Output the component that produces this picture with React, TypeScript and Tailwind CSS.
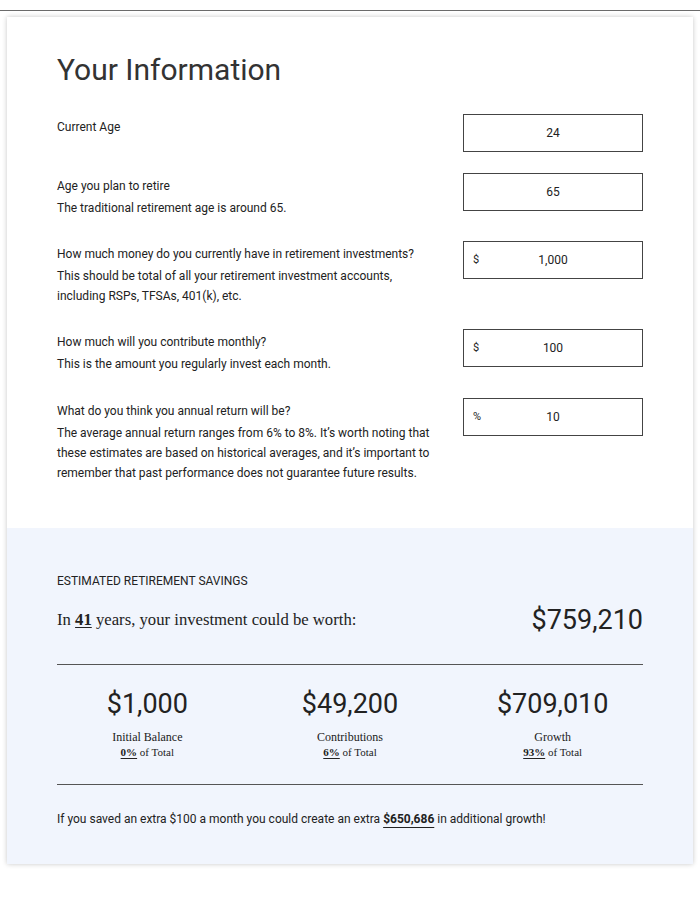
import type { ReactNode } from "react";

interface Field {
  label: string;
  help?: string;
  prefix?: string;
  value: string;
  gap: string;
}

const fields: Field[] = [
  { label: "Current Age", value: "24", gap: "mt-[26px]" },
  {
    label: "Age you plan to retire",
    help: "The traditional retirement age is around 65.",
    value: "65",
    gap: "mt-[21px]",
  },
  {
    label: "How much money do you currently have in retirement investments?",
    help: "This should be total of all your retirement investment accounts, including RSPs, TFSAs, 401(k), etc.",
    prefix: "$",
    value: "1,000",
    gap: "mt-[23px]",
  },
  {
    label: "How much will you contribute monthly?",
    help: "This is the amount you regularly invest each month.",
    prefix: "$",
    value: "100",
    gap: "mt-[23px]",
  },
  {
    label: "What do you think you annual return will be?",
    help: "The average annual return ranges from 6% to 8%. It’s worth noting that these estimates are based on historical averages, and it’s important to remember that past performance does not guarantee future results.",
    prefix: "%",
    value: "10",
    gap: "mt-[24px]",
  },
];

const breakdown = [
  { amount: "$1,000", label: "Initial Balance", pct: "0%" },
  { amount: "$49,200", label: "Contributions", pct: "6%" },
  { amount: "$709,010", label: "Growth", pct: "93%" },
];

function FieldRow({ field }: { field: Field }) {
  return (
    <div className={`flex items-start justify-between ${field.gap}`}>
      <div className="w-[385px] pt-[3px] text-[12px] leading-[20px] text-[#222]">
        <p>{field.label}</p>
        {field.help && <p className="mt-[2px]">{field.help}</p>}
      </div>
      <div className="relative flex h-[38px] w-[180px] items-center justify-center border border-[#444] bg-white text-[12px] text-[#222]">
        {field.prefix && (
          <span className="absolute left-[9px] text-[11px]">{field.prefix}</span>
        )}
        <span>{field.value}</span>
      </div>
    </div>
  );
}

function Rule() {
  return <div className="h-px bg-[#555]" />;
}

function Underlined({ children }: { children: ReactNode }) {
  return <span className="font-bold underline underline-offset-2">{children}</span>;
}

export default function App() {
  return (
    <div
      className="min-h-[900px] bg-white pt-[10px] text-[#222]"
      style={{ fontFamily: "Roboto, 'Liberation Sans', sans-serif" }}
    >
      <div className="h-px bg-[#6b6b6b]" />

      <div className="mx-[7px] mt-[6px] bg-white shadow-[0_0_5px_rgba(0,0,0,0.22)]">
        {/* ── Inputs ── */}
        <div className="px-[50px] pt-[35px] pb-[45px]">
          <h1 className="text-[30px] leading-[36px] font-normal text-[#333]">
            Your Information
          </h1>
          {fields.map((f) => (
            <FieldRow key={f.label} field={f} />
          ))}
        </div>

        {/* ── Results ── */}
        <div className="bg-[#f1f5fd] px-[50px] pt-[45px] pb-[37px]">
          <p className="text-[12px] leading-[16px] uppercase">
            Estimated Retirement Savings
          </p>

          <div className="mt-[14px] flex items-center justify-between">
            <p className="font-['Liberation_Serif',serif] text-[16.7px]">
              In <Underlined>41</Underlined> years, your investment could be worth:
            </p>
            <p className="text-[27px] leading-[34px]">$759,210</p>
          </div>

          <div className="mt-[27px]">
            <Rule />
          </div>

          <div className="-mx-[11px] mt-[22px] grid grid-cols-3 pb-[24px]">
            {breakdown.map((b) => (
              <div key={b.label} className="flex flex-col items-center">
                <p className="text-[27px] leading-[34px]">{b.amount}</p>
                <p className="mt-[9px] font-['Liberation_Serif',serif] text-[12px] leading-[15px]">
                  {b.label}
                </p>
                <p className="font-['Liberation_Serif',serif] text-[11px] leading-[15px]">
                  <Underlined>{b.pct}</Underlined> of Total
                </p>
              </div>
            ))}
          </div>

          <Rule />

          <p className="mt-[26px] text-[12px] leading-[16px]">
            If you saved an extra $100 a month you could create an extra{" "}
            <span className="font-bold underline underline-offset-4">$650,686</span> in
            additional growth!
          </p>
        </div>
      </div>
    </div>
  );
}
